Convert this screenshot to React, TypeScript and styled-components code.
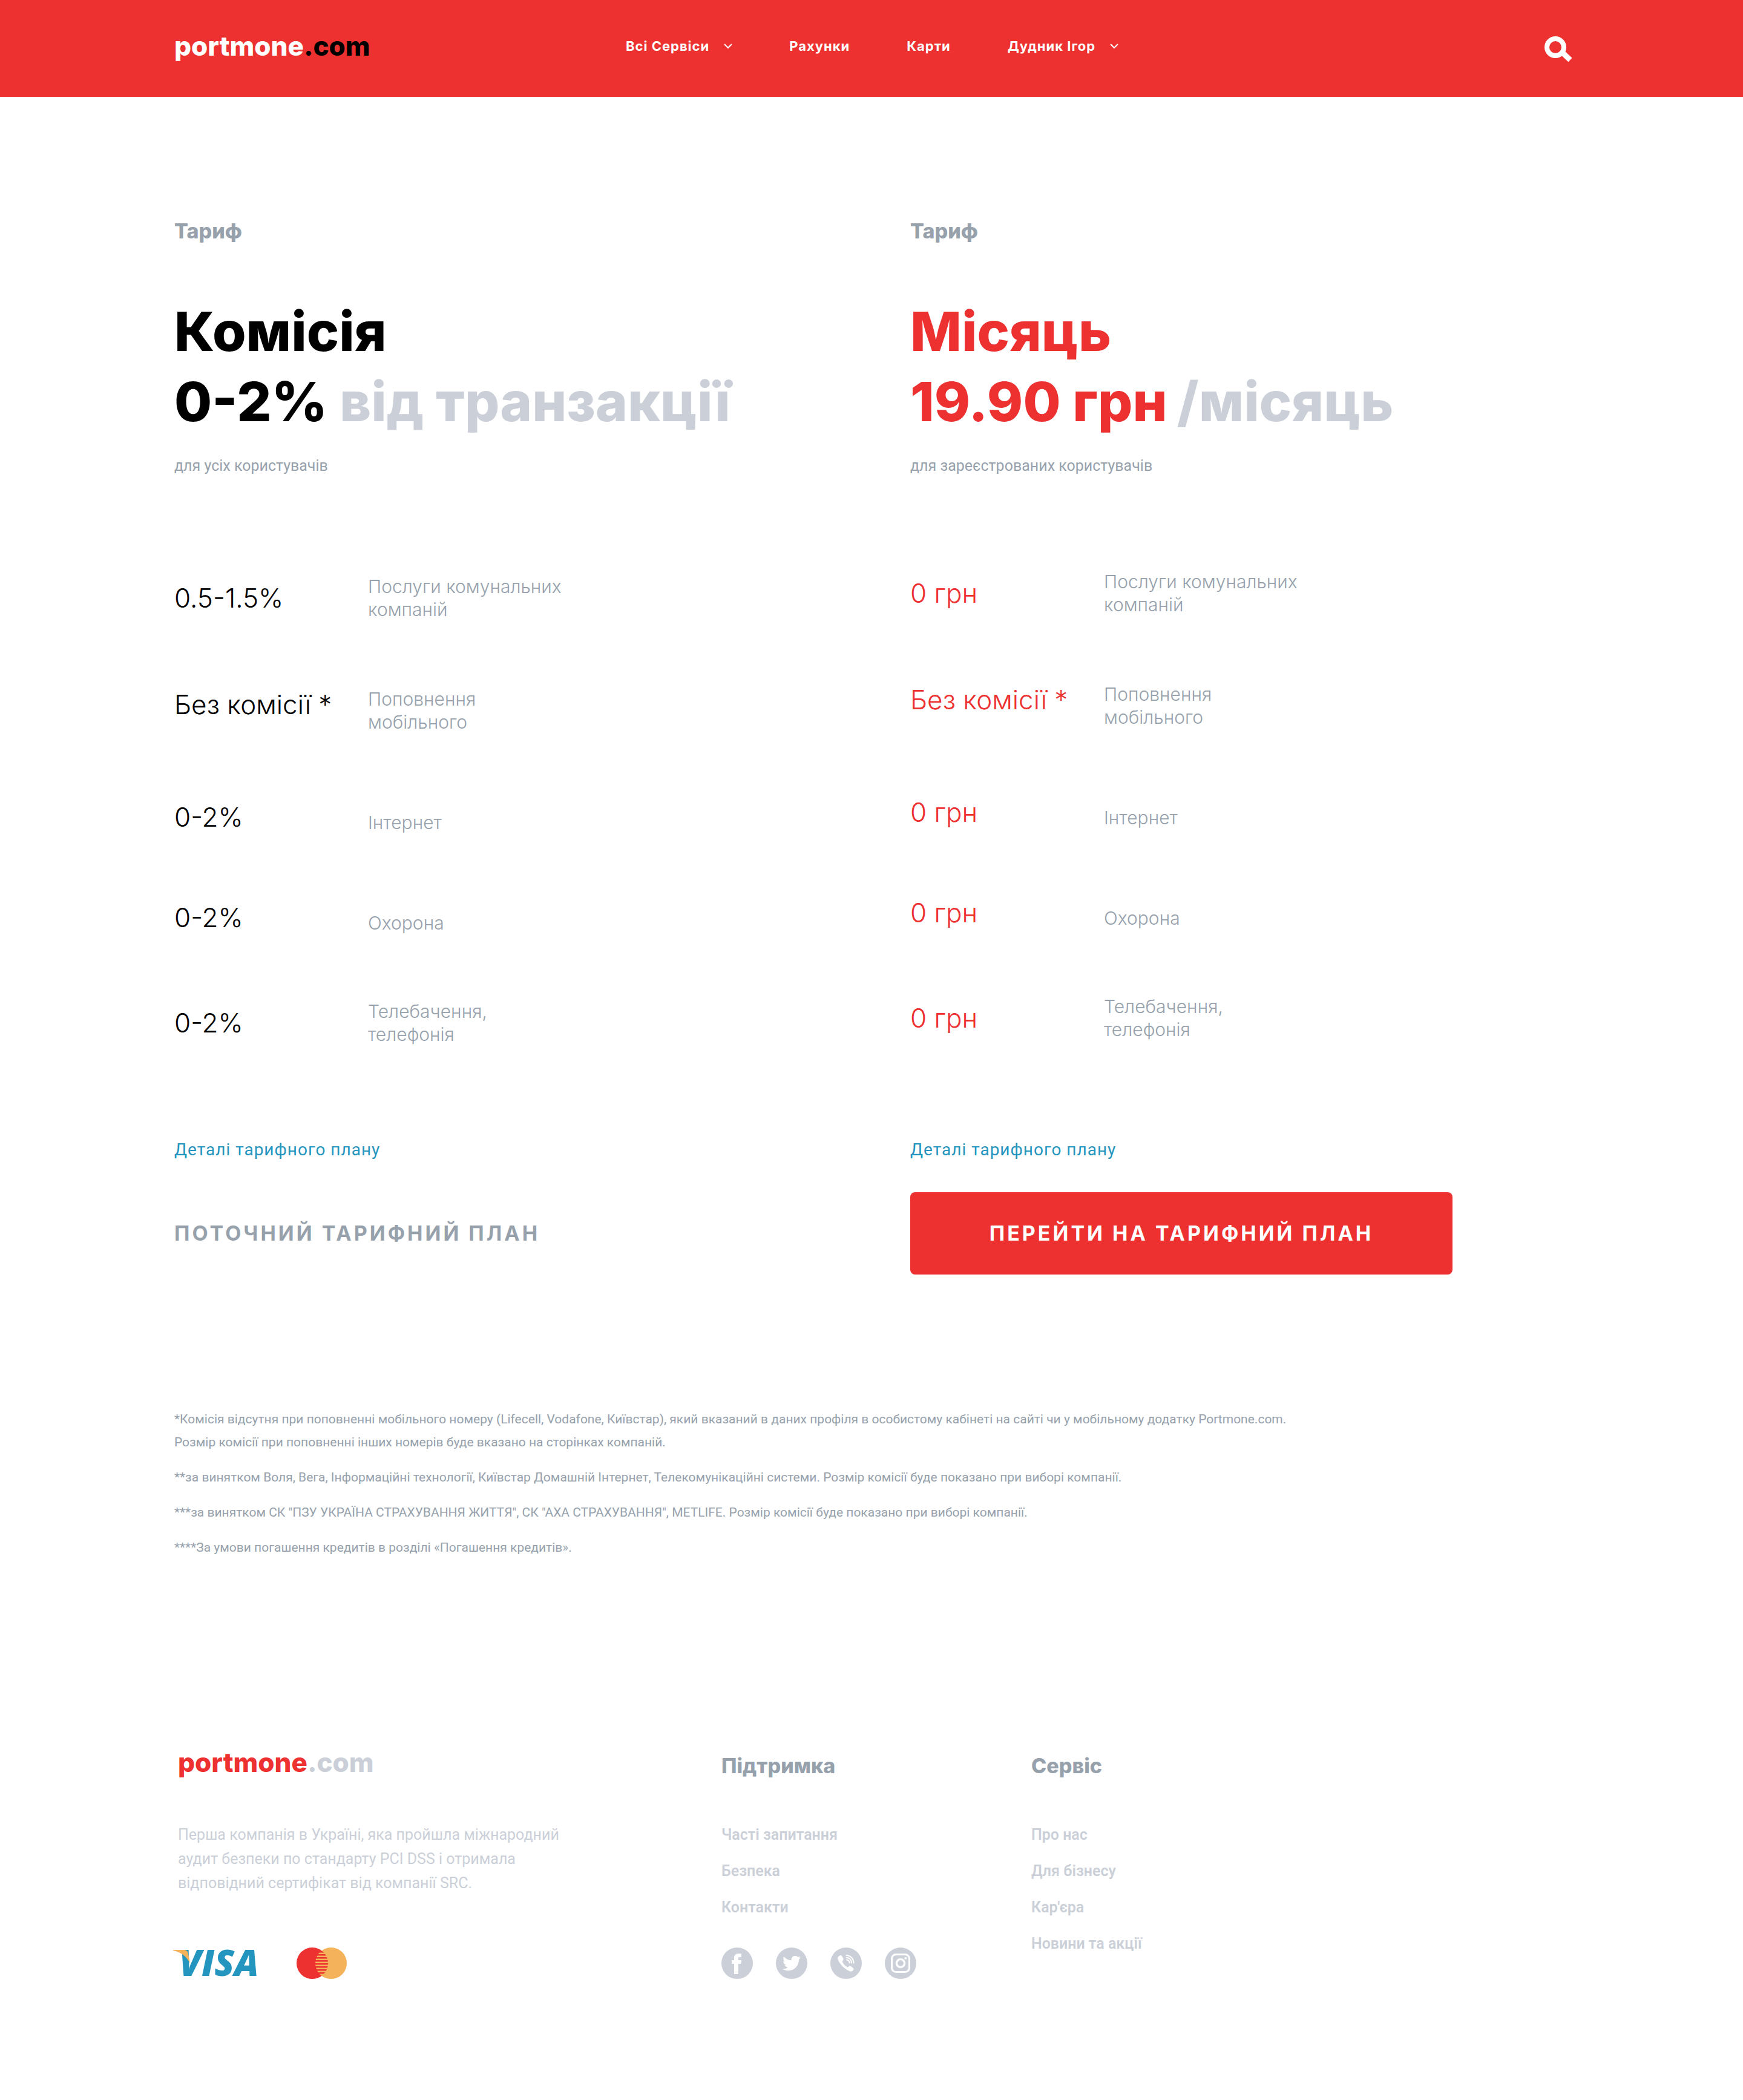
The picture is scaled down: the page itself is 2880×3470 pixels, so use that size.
import React from 'react';
import styled, { createGlobalStyle } from 'styled-components';
import { FaTwitter } from 'react-icons/fa';

const color = {
  red: '#ed3030',
  black: '#000000',
  white: '#ffffff',
  slate: '#96a1ac',
  mist: '#cbd0d8',
  blue: '#2495be',
  amber: '#f4b35a',
};

const display = "Inter, 'Open Sans', sans-serif";
const body = "Roboto, 'Noto Sans', sans-serif";

const GlobalStyle = createGlobalStyle`
  *, *::before, *::after { box-sizing: border-box; }
  body { margin: 0; background: ${color.white}; font-family: ${body}; }
  h1, h2, h3, p, ul { margin: 0; padding: 0; }
  ul { list-style: none; }
  a { color: inherit; text-decoration: none; }
  button { border: 0; padding: 0; background: none; color: inherit; cursor: pointer; }
  svg { display: block; }
`;

const Header = styled.header`
  display: flex;
  align-items: center;
  min-height: 160px;
  padding: 0 calc(10% - 6px) 8px 10%;
  background: ${color.red};
  color: ${color.white};
`;

const Logo = styled.a<{ $name: string; $zone: string }>`
  font: 800 44px/56px ${display};
  color: ${(p) => p.$name};
  white-space: nowrap;

  span {
    color: ${(p) => p.$zone};
  }
`;

const LogoSlot = styled.div`
  flex: 0 0 746px;
`;

const Nav = styled.nav`
  display: flex;
  flex: 1;
  gap: 94px;
`;

const navText = `
  display: flex;
  align-items: center;
  gap: 24px;
  font: 700 22px/28px ${display};
  letter-spacing: 1px;
  white-space: nowrap;
`;

const NavLink = styled.a`
  ${navText}
`;

const NavButton = styled.button`
  ${navText}
`;

const SearchButton = styled.button`
  padding-top: 10px;
`;

const Main = styled.main`
  padding: 202px 10% 0;
`;

const Plans = styled.div`
  display: grid;
  grid-template-columns: 19fr 17fr;
`;

const PlanCard = styled.section`
  display: flex;
  flex-direction: column;
  align-items: flex-start;
`;

const Eyebrow = styled.p`
  font: 800 34px/40px ${display};
  color: ${color.slate};
`;

const PlanTitle = styled.h2<{ $accent: string }>`
  margin-top: 88px;
  font: 800 90px/116px ${display};
  color: ${(p) => p.$accent};
  white-space: nowrap;
`;

const TitleSuffix = styled.span<{ $joined?: boolean }>`
  margin-left: ${(p) => (p.$joined ? '16px' : '0')};
  color: ${color.mist};
`;

const Audience = styled.p`
  margin-top: 32px;
  font-size: 25px;
  line-height: 32px;
  color: ${color.slate};
`;

const RateTable = styled.table<{ $raised: boolean }>`
  margin: ${(p) => (p.$raised ? '156px 0 162px' : '164px 0 154px')};
  border-collapse: collapse;
  font-family: ${display};
  font-weight: 350;
  text-align: left;
`;

const RateRow = styled.tr<{ $height: number }>`
  height: ${(p) => p.$height}px;
  vertical-align: top;
`;

const RateValue = styled.td<{ $accent: string }>`
  width: 320px;
  padding: 10px 0 0;
  font-size: 44px;
  line-height: 56px;
  color: ${(p) => p.$accent};
  white-space: nowrap;
`;

const RateName = styled.th<{ $drop: number }>`
  padding: ${(p) => p.$drop}px 0 0;
  font-size: 30px;
  font-weight: inherit;
  line-height: 38px;
  color: ${color.slate};
  white-space: pre-line;
`;

const DetailsLink = styled.a`
  margin-bottom: 52px;
  font-size: 28px;
  line-height: 36px;
  letter-spacing: 1px;
  color: ${color.blue};
`;

const actionText = `
  display: flex;
  align-items: center;
  min-height: 136px;
  font: 700 34px/40px ${display};
  letter-spacing: 4px;
  text-transform: uppercase;
`;

const CurrentPlan = styled.p`
  ${actionText}
  color: ${color.slate};
`;

const SwitchButton = styled.button`
  ${actionText}
  justify-content: center;
  width: 896px;
  max-width: 100%;
  border-radius: 8px;
  background: ${color.red};
  color: ${color.white};
`;

const Notes = styled.section`
  display: grid;
  gap: 20px;
  margin-top: 220px;
  font-size: 21px;
  line-height: 38px;
  color: ${color.slate};
`;

const Footer = styled.footer`
  display: grid;
  grid-template-columns: 113fr 64fr 111fr;
  padding: 308px 10% 200px;
  color: ${color.mist};
`;

const Brand = styled.div`
  padding-left: 6px;
`;

const About = styled.p`
  max-width: 660px;
  margin-top: 72px;
  font-size: 25px;
  line-height: 40px;
`;

const Payments = styled.div`
  display: flex;
  align-items: center;
  gap: 64px;
  height: 52px;
  margin-top: 86px;
`;

const FooterColumn = styled.nav`
  padding-top: 14px;
`;

const FooterTitle = styled.h3`
  margin-bottom: 64px;
  font: 800 34px/40px ${display};
  color: ${color.slate};
`;

const FooterLink = styled.a`
  display: block;
  width: fit-content;
  font-size: 25px;
  font-weight: 600;
  line-height: 60px;
`;

const Socials = styled.div`
  display: flex;
  gap: 38px;
  margin-top: 36px;
`;

const SocialLink = styled.a`
  display: grid;
  place-items: center;
  width: 52px;
  height: 52px;
  border-radius: 50%;
  background: ${color.mist};
  color: ${color.white};
`;

const Chevron = () => (
  <svg width="14" height="9" viewBox="0 0 14 9" fill="none" stroke="currentColor" strokeWidth="2" aria-hidden="true">
    <path d="M1 1l6 6 6-6" />
  </svg>
);

const SearchIcon = () => (
  <svg width="46" height="42" viewBox="0 0 46 42" fill="none" stroke="currentColor" aria-hidden="true">
    <circle cx="18" cy="18" r="14" strokeWidth="8" />
    <path d="M28 25.500L42.500 39" strokeWidth="9" />
  </svg>
);

const VisaLogo = () => (
  <svg width="138" height="44" viewBox="0 0 138 44" overflow="visible" role="img" aria-label="Visa">
    <text x="8" y="43" fontFamily="Open Sans" fontWeight="800" fontStyle="italic" fontSize="60" fill={color.blue}>
      VISA
    </text>
    <path d="M-2 0H16C20 0 22 2 23 6L26 22C20 11 12 4 -2 1z" fill={color.amber} />
  </svg>
);

const MastercardLogo = () => (
  <svg width="83" height="52" viewBox="0 0 83 52" role="img" aria-label="Mastercard">
    <clipPath id="mc-left">
      <circle cx="26" cy="26" r="26" />
    </clipPath>
    <circle cx="26" cy="26" r="26" fill={color.red} />
    <circle cx="57" cy="26" r="26" fill={color.amber} />
    <g clipPath="url(#mc-left)" fill={color.red}>
      {[6, 11, 16, 21, 26, 31, 36, 41].map((y) => (
        <rect key={y} x="31" y={y} width="21" height="2.500" />
      ))}
    </g>
  </svg>
);

const FacebookIcon = () => (
  <svg width="52" height="52" viewBox="0 0 52 52" fill="currentColor" aria-hidden="true">
    <path d="M28 44V27h4.500l.5-6h-5v-3c0-1.500.7-2 2-2h3v-6h-5c-4.500 0-7 3-7 7v4h-4v6h4v17z" />
  </svg>
);

const ViberIcon = () => (
  <svg width="52" height="52" viewBox="0 0 52 52" aria-hidden="true">
    <path
      fill="currentColor"
      d="M15.500 13.500c1.500-.8 2.800-.4 3.800 1.100l2 3.300c.8 1.500.6 2.500-.6 3.600-1 .9-1.100 1.700-.4 3.100 1.500 3 4 5.600 7.200 7.400 1.200.6 2 .5 2.900-.4 1.200-1.200 2.400-1.300 3.800-.4l3 2.200c1.500 1.100 1.800 2.200 1 3.500-1.600 2.400-3.700 3.400-6.300 2.300C22.900 35.200 15.800 28 12.300 19.300c-.9-2.500.8-4.600 3.200-5.800z"
    />
    <g fill="none" stroke="currentColor" strokeWidth="2" strokeLinecap="round">
      <path d="M26.500 13c7 .3 12 5.500 12 12.500" />
      <path d="M26.700 16.800c5 .3 8.300 3.700 8.300 8.700" />
      <path d="M27 20.500c2.800.2 4.500 2 4.600 4.800" />
    </g>
  </svg>
);

const InstagramIcon = () => (
  <svg width="52" height="52" viewBox="0 0 52 52" fill="none" stroke="currentColor" aria-hidden="true">
    <rect x="11.500" y="11.500" width="29" height="29" rx="7" strokeWidth="3" />
    <circle cx="26" cy="26" r="6.600" strokeWidth="3.400" />
    <circle cx="34.300" cy="17.700" r="2" fill="currentColor" stroke="none" />
  </svg>
);

// Row geometry shared by both tariff tables.
const services = [
  { name: 'Послуги комунальних\nкомпаній', height: 176, drop: 0 },
  { name: 'Поповнення\nмобільного', height: 186, drop: 10 },
  { name: 'Інтернет', height: 166, drop: 28 },
  { name: 'Охорона', height: 174, drop: 28 },
  { name: 'Телебачення,\nтелефонія', height: 76, drop: 0 },
];

type PlanProps = {
  accent: string;
  name: string;
  price: string;
  suffix: string;
  joined?: boolean;
  audience: string;
  values: string[];
  raised?: boolean;
  children: React.ReactNode;
};

const Plan = ({ accent, name, price, suffix, joined, audience, values, raised = false, children }: PlanProps) => (
  <PlanCard>
    <Eyebrow>Тариф</Eyebrow>
    <PlanTitle $accent={accent}>
      {name}
      <br />
      {price}
      {joined ? '' : ' '}
      <TitleSuffix $joined={joined}>{suffix}</TitleSuffix>
    </PlanTitle>
    <Audience>{audience}</Audience>
    <RateTable $raised={raised}>
      <tbody>
        {services.map((service, i) => (
          <RateRow key={service.name} $height={service.height}>
            <RateValue $accent={accent}>{values[i]}</RateValue>
            <RateName scope="row" $drop={service.drop}>
              {service.name}
            </RateName>
          </RateRow>
        ))}
      </tbody>
    </RateTable>
    <DetailsLink href="#details">Деталі тарифного плану</DetailsLink>
    {children}
  </PlanCard>
);

export default function App() {
  return (
    <>
      <GlobalStyle />
      <Header>
        <LogoSlot>
          <Logo href="#home" $name={color.white} $zone={color.black}>
            portmone<span>.com</span>
          </Logo>
        </LogoSlot>
        <Nav>
          <NavButton type="button">
            Всі Сервіси
            <Chevron />
          </NavButton>
          <NavLink href="#bills">Рахунки</NavLink>
          <NavLink href="#cards">Карти</NavLink>
          <NavButton type="button">
            Дудник Ігор
            <Chevron />
          </NavButton>
        </Nav>
        <SearchButton type="button" aria-label="Пошук">
          <SearchIcon />
        </SearchButton>
      </Header>

      <Main>
        <Plans>
          <Plan
            accent={color.black}
            name="Комісія"
            price="0-2%"
            suffix="від транзакції"
            audience="для усіх користувачів"
            values={['0.5-1.5%', 'Без комісії *', '0-2%', '0-2%', '0-2%']}
          >
            <CurrentPlan>Поточний тарифний план</CurrentPlan>
          </Plan>
          <Plan
            accent={color.red}
            name="Місяць"
            price="19.90 грн"
            suffix="/місяць"
            joined
            raised
            audience="для зареєстрованих користувачів"
            values={['0 грн', 'Без комісії *', '0 грн', '0 грн', '0 грн']}
          >
            <SwitchButton type="button">Перейти на тарифний план</SwitchButton>
          </Plan>
        </Plans>

        <Notes>
          <p>
            *Комісія відсутня при поповненні мобільного номеру (Lifecell, Vodafone, Київстар), який вказаний в даних
            профіля в особистому кабінеті на сайті чи у мобільному додатку Portmone.com.
            <br />
            Розмір комісії при поповненні інших номерів буде вказано на сторінках компаній.
          </p>
          <p>
            **за винятком Воля, Вега, Інформаційні технології, Київстар Домашній Інтернет, Телекомунікаційні системи.
            Розмір комісії буде показано при виборі компанії.
          </p>
          <p>
            ***за винятком СК "ПЗУ УКРАЇНА СТРАХУВАННЯ ЖИТТЯ", СК "АХА СТРАХУВАННЯ", METLIFE. Розмір комісії буде
            показано при виборі компанії.
          </p>
          <p>****За умови погашення кредитів в розділі «Погашення кредитів».</p>
        </Notes>
      </Main>

      <Footer>
        <div>
          <Brand>
            <Logo href="#home" $name={color.red} $zone={color.mist}>
              portmone<span>.com</span>
            </Logo>
            <About>
              Перша компанія в Україні, яка пройшла міжнародний аудит безпеки по стандарту PCI DSS і отримала
              відповідний сертифікат від компанії SRC.
            </About>
          </Brand>
          <Payments>
            <VisaLogo />
            <MastercardLogo />
          </Payments>
        </div>
        <FooterColumn aria-label="Підтримка">
          <FooterTitle>Підтримка</FooterTitle>
          <FooterLink href="#faq">Часті запитання</FooterLink>
          <FooterLink href="#security">Безпека</FooterLink>
          <FooterLink href="#contacts">Контакти</FooterLink>
          <Socials>
            <SocialLink href="#facebook" aria-label="Facebook">
              <FacebookIcon />
            </SocialLink>
            <SocialLink href="#twitter" aria-label="Twitter">
              <FaTwitter size={30} />
            </SocialLink>
            <SocialLink href="#viber" aria-label="Viber">
              <ViberIcon />
            </SocialLink>
            <SocialLink href="#instagram" aria-label="Instagram">
              <InstagramIcon />
            </SocialLink>
          </Socials>
        </FooterColumn>
        <FooterColumn aria-label="Сервіс">
          <FooterTitle>Сервіс</FooterTitle>
          <FooterLink href="#about">Про нас</FooterLink>
          <FooterLink href="#business">Для бізнесу</FooterLink>
          <FooterLink href="#career">Кар'єра</FooterLink>
          <FooterLink href="#news">Новини та акції</FooterLink>
        </FooterColumn>
      </Footer>
    </>
  );
}
